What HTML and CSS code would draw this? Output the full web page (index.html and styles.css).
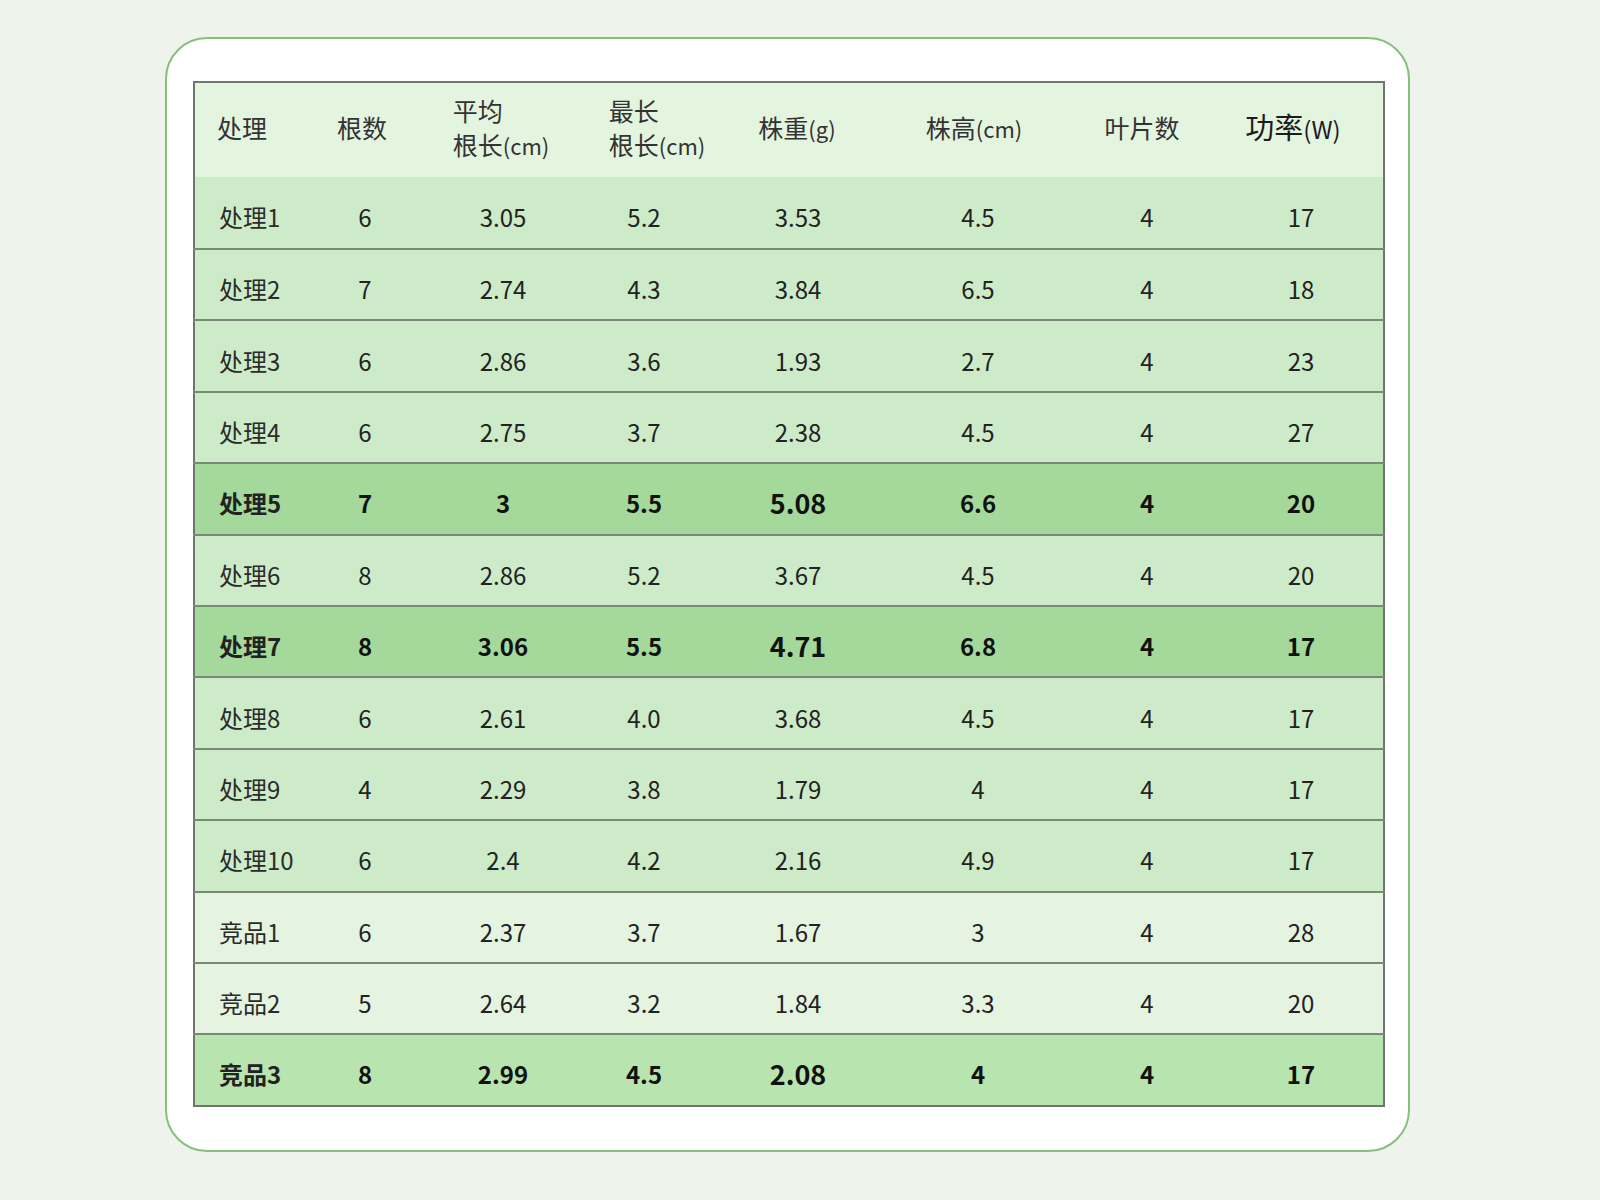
FILE: index.html
```html
<!DOCTYPE html>
<html lang="zh-CN">
<head>
<meta charset="utf-8">
<title>处理对比表</title>
<link rel="stylesheet" href="styles.css">
</head>
<body>
<div class="page">
  <div class="card">
    <table class="data">
      <colgroup>
        <col class="c1"><col class="c2"><col class="c3"><col class="c4"><col class="c5"><col class="c6"><col class="c7"><col class="c8">
      </colgroup>
      <thead>
        <tr>
          <th class="name">处理</th>
          <th class="h2">根数</th>
          <th><span class="stack s3">平均<br>根长<small>(cm)</small></span></th>
          <th><span class="stack s4">最长<br>根长<small>(cm)</small></span></th>
          <th class="h5">株重<small>(g)</small></th>
          <th class="h6">株高<small>(cm)</small></th>
          <th class="h7">叶片数</th>
          <th class="power">功率<small>(W)</small></th>
        </tr>
      </thead>
      <tbody>
        <tr class="std"><td class="name">处理1</td><td>6</td><td>3.05</td><td>5.2</td><td>3.53</td><td>4.5</td><td>4</td><td>17</td></tr>
        <tr class="std"><td class="name">处理2</td><td>7</td><td>2.74</td><td>4.3</td><td>3.84</td><td>6.5</td><td>4</td><td>18</td></tr>
        <tr class="std"><td class="name">处理3</td><td>6</td><td>2.86</td><td>3.6</td><td>1.93</td><td>2.7</td><td>4</td><td>23</td></tr>
        <tr class="std"><td class="name">处理4</td><td>6</td><td>2.75</td><td>3.7</td><td>2.38</td><td>4.5</td><td>4</td><td>27</td></tr>
        <tr class="best"><td class="name">处理5</td><td>7</td><td>3</td><td>5.5</td><td class="big">5.08</td><td>6.6</td><td>4</td><td>20</td></tr>
        <tr class="std"><td class="name">处理6</td><td>8</td><td>2.86</td><td>5.2</td><td>3.67</td><td>4.5</td><td>4</td><td>20</td></tr>
        <tr class="best"><td class="name">处理7</td><td>8</td><td>3.06</td><td>5.5</td><td class="big">4.71</td><td>6.8</td><td>4</td><td>17</td></tr>
        <tr class="std"><td class="name">处理8</td><td>6</td><td>2.61</td><td>4.0</td><td>3.68</td><td>4.5</td><td>4</td><td>17</td></tr>
        <tr class="std"><td class="name">处理9</td><td>4</td><td>2.29</td><td>3.8</td><td>1.79</td><td>4</td><td>4</td><td>17</td></tr>
        <tr class="std"><td class="name">处理10</td><td>6</td><td>2.4</td><td>4.2</td><td>2.16</td><td>4.9</td><td>4</td><td>17</td></tr>
        <tr class="rival"><td class="name">竞品1</td><td>6</td><td>2.37</td><td>3.7</td><td>1.67</td><td>3</td><td>4</td><td>28</td></tr>
        <tr class="rival"><td class="name">竞品2</td><td>5</td><td>2.64</td><td>3.2</td><td>1.84</td><td>3.3</td><td>4</td><td>20</td></tr>
        <tr class="rival-best"><td class="name">竞品3</td><td>8</td><td>2.99</td><td>4.5</td><td class="big">2.08</td><td>4</td><td>4</td><td>17</td></tr>
      </tbody>
    </table>
  </div>
</div>
</body>
</html>
```
FILE: styles.css
```css
html, body {
  margin: 0;
  padding: 0;
}
body {
  background: #eef4ec;
  font-family: "Noto Sans CJK SC", "Noto Sans", sans-serif;
  color: #222;
}
.page {
  padding: 37px 0 48px 165px;
}
.card {
  box-sizing: border-box;
  width: 1245px;
  height: 1115px;
  background: #ffffff;
  border: 2px solid #86bf7c;
  border-radius: 42px;
  padding: 42px 25px 0 26px;
}
.data {
  width: 1190px;
  table-layout: fixed;
  border-collapse: collapse;
  border: 2px solid #6d776c;
}
.c1 { width: 103px; }
.c2 { width: 136px; }
.c3 { width: 140px; }
.c4 { width: 142px; }
.c5 { width: 166px; }
.c6 { width: 194px; }
.c7 { width: 144px; }
.c8 { width: 165px; }

thead tr {
  background: #e3f4df;
}
th {
  height: 88px;
  padding: 0 0 6px 0;
  font-weight: normal;
  font-size: 25px;
  color: #333;
  text-align: center;
  vertical-align: middle;
  line-height: 34px;
}
th small {
  font-size: 22px;
}
th.name {
  text-align: left;
  padding-left: 22px;
}
th.h2 { padding-right: 6px; }
th.h5 { padding-right: 2px; }
th.h6 { padding-right: 8px; }
th.h7 { padding-right: 10px; }
th.power {
  font-size: 29px;
  color: #1c1c1c;
  padding-right: 16px;
}
th.power small {
  font-size: 24px;
}
.stack {
  display: inline-block;
  text-align: left;
}
.s3 { margin-right: 4px; }
.s4 { margin-left: 26px; }
td {
  height: 61.4px;
  padding: 8px 0 0 0;
  font-size: 24px;
  text-align: center;
  vertical-align: middle;
  border-bottom: 2px solid #7a8878;
  color: #222;
}
td.name {
  text-align: left;
  padding-left: 24px;
  color: #2b2b2b;
}
tr.std { background: #cdebc8; }
tr.best { background: #a4d99b; }
tr.rival { background: #e4f4e0; }
tr.rival-best { background: #b8e4b0; }
tr.best td, tr.rival-best td {
  font-weight: bold;
  color: #111;
}
tr.best td.name, tr.rival-best td.name {
  color: #222;
}
td.big {
  font-size: 27px;
}
tbody tr:first-child td {
  height: 63px;
}
tbody tr:last-child td {
  border-bottom: none;
}
```
